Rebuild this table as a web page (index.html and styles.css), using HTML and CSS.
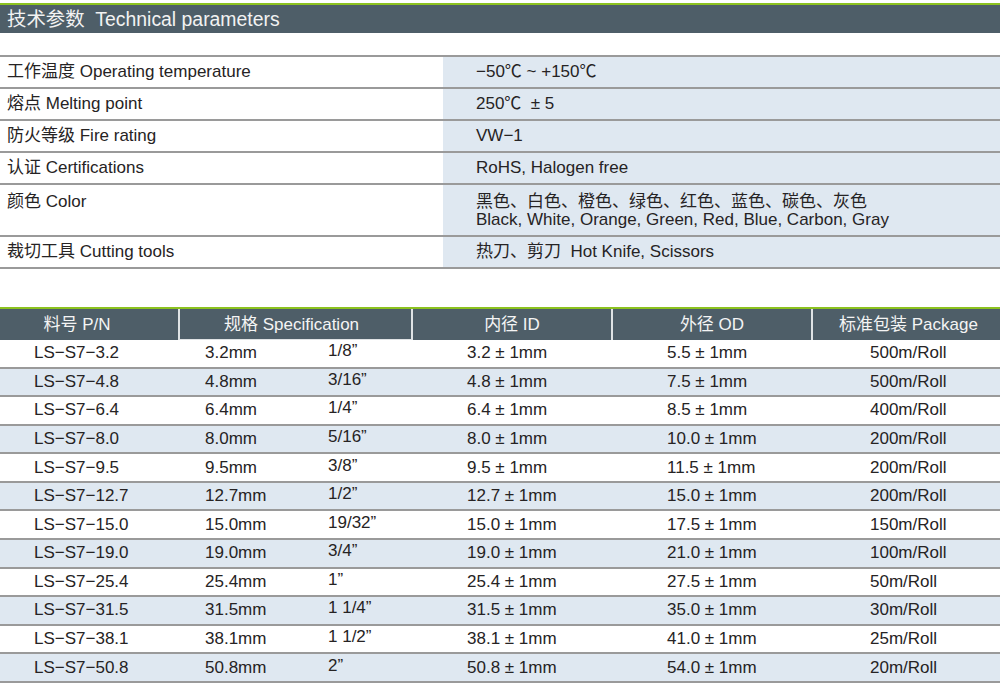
FILE: index.html
```html
<!DOCTYPE html>
<html lang="zh">
<head>
<meta charset="utf-8">
<link rel="stylesheet" href="styles.css">
</head>
<body>
<div class="title">技术参数&nbsp; Technical parameters</div>

<div class="params">
  <div class="prow"><div class="pk">工作温度 Operating temperature</div><div class="pv">−50℃ ~ +150℃</div></div>
  <div class="prow"><div class="pk">熔点 Melting point</div><div class="pv">250℃&nbsp; ± 5</div></div>
  <div class="prow"><div class="pk">防火等级 Fire rating</div><div class="pv">VW−1</div></div>
  <div class="prow"><div class="pk">认证 Certifications</div><div class="pv">RoHS, Halogen free</div></div>
  <div class="prow tall"><div class="pk">颜色 Color</div><div class="pv">黑色、白色、橙色、绿色、红色、蓝色、碳色、灰色<br>Black, White, Orange, Green, Red, Blue, Carbon, Gray</div></div>
  <div class="prow"><div class="pk">裁切工具 Cutting tools</div><div class="pv">热刀、剪刀&nbsp; Hot Knife, Scissors</div></div>
</div>

<div class="spec">
  <div class="shead">
    <div class="hc c1">料号 P/N</div>
    <div class="hc c2">规格 Specification</div>
    <div class="hc c3">内径 ID</div>
    <div class="hc c4">外径 OD</div>
    <div class="hc c5">标准包装 Package</div>
  </div>
  <div class="srow"><div class="d1">LS−S7−3.2</div><div class="d2"><span class="mm">3.2mm</span><span class="in">1/8”</span></div><div class="d3">3.2 ± 1mm</div><div class="d4">5.5 ± 1mm</div><div class="d5">500m/Roll</div></div>
  <div class="srow"><div class="d1">LS−S7−4.8</div><div class="d2"><span class="mm">4.8mm</span><span class="in">3/16”</span></div><div class="d3">4.8 ± 1mm</div><div class="d4">7.5 ± 1mm</div><div class="d5">500m/Roll</div></div>
  <div class="srow"><div class="d1">LS−S7−6.4</div><div class="d2"><span class="mm">6.4mm</span><span class="in">1/4”</span></div><div class="d3">6.4 ± 1mm</div><div class="d4">8.5 ± 1mm</div><div class="d5">400m/Roll</div></div>
  <div class="srow"><div class="d1">LS−S7−8.0</div><div class="d2"><span class="mm">8.0mm</span><span class="in">5/16”</span></div><div class="d3">8.0 ± 1mm</div><div class="d4">10.0 ± 1mm</div><div class="d5">200m/Roll</div></div>
  <div class="srow"><div class="d1">LS−S7−9.5</div><div class="d2"><span class="mm">9.5mm</span><span class="in">3/8”</span></div><div class="d3">9.5 ± 1mm</div><div class="d4">11.5 ± 1mm</div><div class="d5">200m/Roll</div></div>
  <div class="srow"><div class="d1">LS−S7−12.7</div><div class="d2"><span class="mm">12.7mm</span><span class="in">1/2”</span></div><div class="d3">12.7 ± 1mm</div><div class="d4">15.0 ± 1mm</div><div class="d5">200m/Roll</div></div>
  <div class="srow"><div class="d1">LS−S7−15.0</div><div class="d2"><span class="mm">15.0mm</span><span class="in">19/32”</span></div><div class="d3">15.0 ± 1mm</div><div class="d4">17.5 ± 1mm</div><div class="d5">150m/Roll</div></div>
  <div class="srow"><div class="d1">LS−S7−19.0</div><div class="d2"><span class="mm">19.0mm</span><span class="in">3/4”</span></div><div class="d3">19.0 ± 1mm</div><div class="d4">21.0 ± 1mm</div><div class="d5">100m/Roll</div></div>
  <div class="srow"><div class="d1">LS−S7−25.4</div><div class="d2"><span class="mm">25.4mm</span><span class="in">1”</span></div><div class="d3">25.4 ± 1mm</div><div class="d4">27.5 ± 1mm</div><div class="d5">50m/Roll</div></div>
  <div class="srow"><div class="d1">LS−S7−31.5</div><div class="d2"><span class="mm">31.5mm</span><span class="in">1 1/4”</span></div><div class="d3">31.5 ± 1mm</div><div class="d4">35.0 ± 1mm</div><div class="d5">30m/Roll</div></div>
  <div class="srow"><div class="d1">LS−S7−38.1</div><div class="d2"><span class="mm">38.1mm</span><span class="in">1 1/2”</span></div><div class="d3">38.1 ± 1mm</div><div class="d4">41.0 ± 1mm</div><div class="d5">25m/Roll</div></div>
  <div class="srow"><div class="d1">LS−S7−50.8</div><div class="d2"><span class="mm">50.8mm</span><span class="in">2”</span></div><div class="d3">50.8 ± 1mm</div><div class="d4">54.0 ± 1mm</div><div class="d5">20m/Roll</div></div>
</div>
</body>
</html>
```

FILE: styles.css
```css
html, body {
  margin: 0;
  padding: 0;
  background: #ffffff;
}
body {
  width: 1000px;
  font-family: "Liberation Sans", "Noto Sans CJK SC", sans-serif;
  font-size: 17px;
  color: #262324;
}

.title {
  margin-top: 3px;
  border-top: 2px solid #8cc21f;
  height: 28px;
  line-height: 28px;
  background: #4e5e68;
  color: #f2f2f2;
  font-size: 19.4px;
  padding-left: 7px;
  white-space: nowrap;
}

.params {
  margin-top: 22px;
  border-top: 2px solid #9a9a9a;
}
.prow {
  display: flex;
  height: 32.1px;
  border-bottom: 2px solid #9a9a9a;
  box-sizing: border-box;
}
.prow.tall {
  height: 51.5px;
}
.pk {
  width: 443px;
  padding-left: 7px;
  box-sizing: border-box;
  display: flex;
  align-items: center;
  line-height: 18px;
}
.pv {
  flex: 1;
  background: #dfe8f1;
  padding-left: 33px;
  display: flex;
  align-items: center;
  line-height: 18px;
}
.prow.tall .pk,
.prow.tall .pv {
  align-items: flex-start;
  padding-top: 8px;
}
.prow.tall .pv {
  display: block;
}

.spec {
  margin-top: 38px;
}
.shead {
  display: grid;
  grid-template-columns: 178px 233px 200px 200px 189px;
  border-top: 2px solid #8cc21f;
  background: #4e5e68;
  height: 33px;
  box-sizing: border-box;
  color: #f4f4f4;
}
.hc {
  display: flex;
  align-items: center;
  justify-content: center;
  border-left: 2px solid #dfe3e5;
  padding-bottom: 3px;
}
.hc.c1 {
  border-left: none;
  padding-right: 24px;
}
.hc.c2 {
  border-bottom: 1px solid #dfe3e5;
  padding-right: 8px;
  padding-bottom: 2px;
}
.hc.c5 {
  padding-left: 4px;
}

.srow {
  display: grid;
  grid-template-columns: 178px 233px 200px 200px 189px;
  height: 28.58px;
  box-sizing: border-box;
  border-bottom: 2px solid #9a9a9a;
  align-items: center;
}
.srow:nth-child(odd) {
  background: #dfe8f1;
}
.d1 { padding-left: 34px; }
.d2 { padding-left: 27px; display: flex; }
.d2 .mm { width: 123px; }
.d2 .in { position: relative; top: -2px; }
.d3 { padding-left: 56px; }
.d4 { padding-left: 56px; }
.d5 { padding-left: 59px; }
```
